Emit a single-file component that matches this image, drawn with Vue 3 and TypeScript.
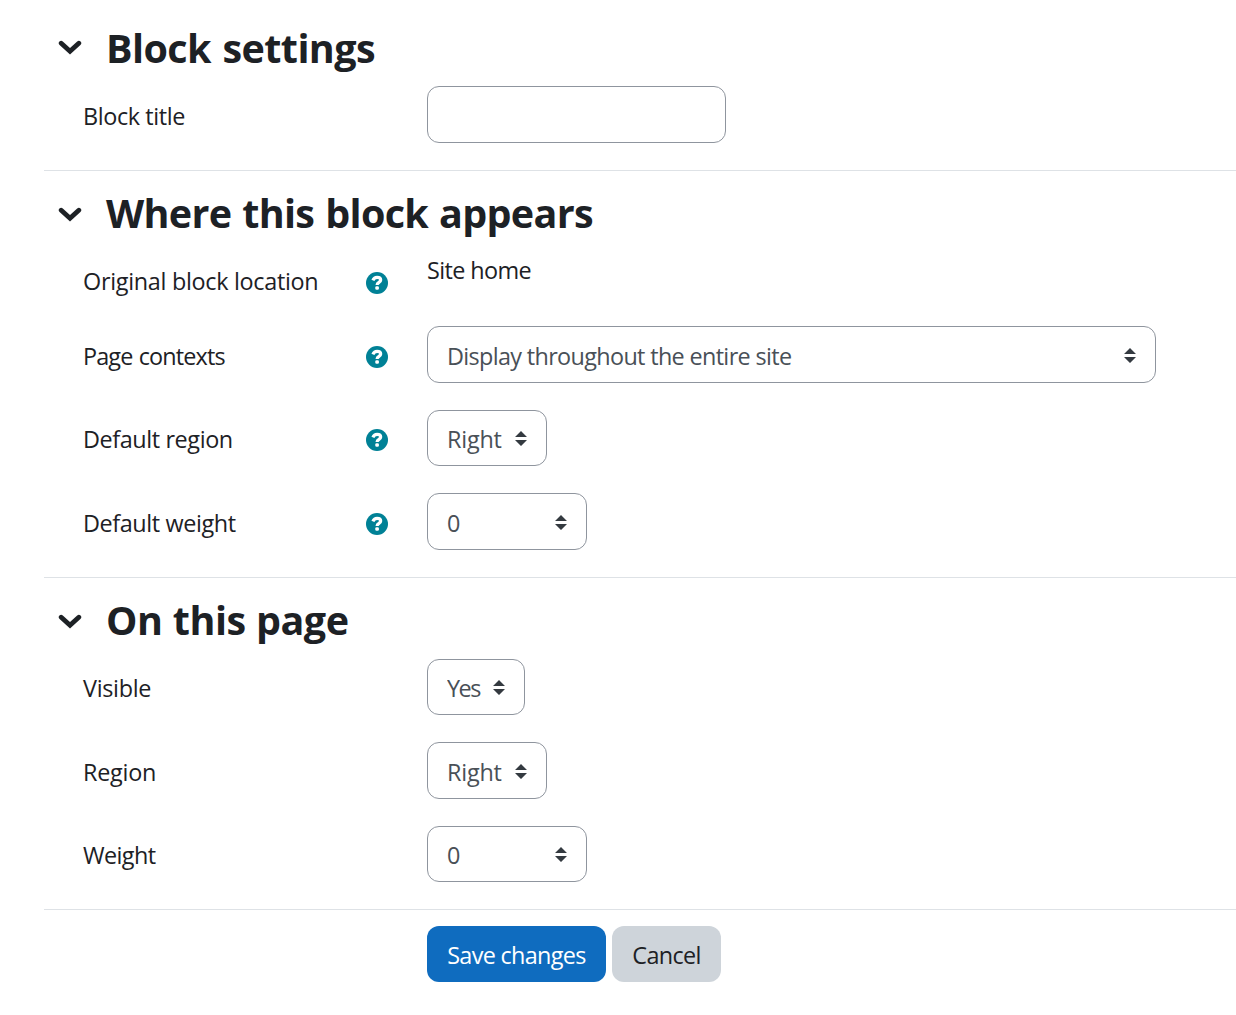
<script setup lang="ts">
import { reactive } from 'vue'

interface Field {
  id: string
  label: string
  kind: 'text' | 'static' | 'select'
  value: string
  size: string
  options?: string[]
  help?: boolean
}

interface Section {
  id: string
  title: string
  fields: Field[]
}

const weights = ['0', '1', '2', '3', '4', '5']

const sections = reactive<Section[]>([
  {
    id: 'settings',
    title: 'Block settings',
    fields: [{ id: 'title', label: 'Block title', kind: 'text', value: '', size: 'medium' }],
  },
  {
    id: 'where',
    title: 'Where this block appears',
    fields: [
      { id: 'location', label: 'Original block location', kind: 'static', value: 'Site home', size: 'plain', help: true },
      {
        id: 'contexts', label: 'Page contexts', kind: 'select', value: 'Display throughout the entire site', size: 'wide', help: true,
        options: ['Display throughout the entire site'],
      },
      { id: 'defaultregion', label: 'Default region', kind: 'select', value: 'Right', size: 'region', help: true, options: ['Right'] },
      { id: 'defaultweight', label: 'Default weight', kind: 'select', value: '0', size: 'weight', help: true, options: weights },
    ],
  },
  {
    id: 'page',
    title: 'On this page',
    fields: [
      { id: 'visible', label: 'Visible', kind: 'select', value: 'Yes', size: 'yesno', options: ['Yes', 'No'] },
      { id: 'region', label: 'Region', kind: 'select', value: 'Right', size: 'region', options: ['Right'] },
      { id: 'weight', label: 'Weight', kind: 'select', value: '0', size: 'weight', options: weights },
    ],
  },
])
</script>

<template>
  <form class="form" @submit.prevent>
    <section v-for="section in sections" :key="section.id" class="section" :class="section.id">
      <header class="heading">
        <svg class="chevron" viewBox="0 0 24 16" aria-hidden="true">
          <path d="M3.2 3.2 L12 11.3 L20.8 3.2" />
        </svg>
        <h3>{{ section.title }}</h3>
      </header>
      <div v-for="field in section.fields" :key="field.id" class="row" :class="[field.kind, 'f-' + field.id]">
        <div class="label-cell">
          <label :for="field.id">{{ field.label }}</label>
          <svg v-if="field.help" class="help" viewBox="0 0 22 22" aria-label="Help">
            <circle cx="11" cy="11" r="11" />
            <path d="M6.9 8.3 C7.8 6.2 9.1 5.4 11.1 5.4 C13.4 5.4 14.7 6.5 14.7 8.1 C14.7 10.4 11.1 10.3 11.1 12.9" />
            <rect x="9.3" y="14.3" width="3.6" height="3.5" rx="1.3" />
          </svg>
        </div>
        <input v-if="field.kind === 'text'" :id="field.id" v-model="field.value" class="control" :class="field.size" type="text" />
        <div v-else-if="field.kind === 'static'" class="value">{{ field.value }}</div>
        <div v-else class="picker" :class="field.size">
          <select :id="field.id" v-model="field.value" class="control">
            <option v-for="option in field.options" :key="option">{{ option }}</option>
          </select>
          <svg class="arrows" viewBox="0 0 12 15" aria-hidden="true">
            <path d="M0 6.1 L6 0 L12 6.1Z M0 9.1 L6 15 L12 9.1Z" />
          </svg>
        </div>
      </div>
    </section>
    <div class="actions">
      <button class="save" type="submit">Save changes</button>
      <button class="cancel" type="button">Cancel</button>
    </div>
  </form>
</template>

<style>
body {
  margin: 0;
  background: #fff;
}
</style>

<style scoped>
.form {
  box-sizing: border-box;
  width: 1236px;
  height: 1015px;
  padding: 6px 0 0 44px;
  overflow: hidden;
  color: #1d2125;
  font-family: "Open Sans", "Noto Sans", sans-serif;
  font-size: 23.4px;
  line-height: 32px;
}
.section {
  border-bottom: 1px solid #dee2e6;
}
.heading {
  display: flex;
  align-items: center;
  height: 80px;
}
.page .heading {
  height: 81px;
}
.chevron {
  width: 24px;
  height: 16px;
  margin: 4px 24px 0 14px;
  fill: none;
  stroke: #1d2125;
  stroke-width: 4.8;
  stroke-linecap: round;
  stroke-linejoin: miter;
}
.where .chevron,
.page .chevron {
  margin-top: 7px;
}
h3 {
  margin: 0;
  padding-top: 4px;
  font-size: 39.5px;
  font-weight: 700;
  line-height: 48px;
  letter-spacing: -0.68px;
  word-spacing: 1.3px;
  white-space: nowrap;
}
.settings h3 {
  letter-spacing: -0.6px;
  word-spacing: 2px;
}
.page h3 {
  padding-top: 2px;
  letter-spacing: -0.45px;
  word-spacing: 0.4px;
}
.row {
  display: flex;
  height: 56px;
  margin-bottom: 27px;
}
.f-title,
.f-contexts,
.f-defaultweight,
.f-region {
  height: 57px;
}
.static {
  height: 75px;
  margin-bottom: 0;
}
.label-cell {
  display: flex;
  align-items: center;
  box-sizing: border-box;
  width: 383px;
  padding: 1px 39px 0 39px;
  white-space: nowrap;
}
.static .label-cell {
  height: 59px;
}
label {
  letter-spacing: -0.4px;
}
.f-title label,
.f-contexts label,
.f-defaultweight label,
.f-region label {
  padding-top: 2px;
}
.f-location label,
.f-visible label {
  letter-spacing: -0.3px;
}
.f-contexts label {
  letter-spacing: -0.85px;
  word-spacing: 1px;
}
.f-region label {
  letter-spacing: -0.25px;
}
.f-weight label {
  letter-spacing: -0.6px;
}
.help {
  width: 22px;
  height: 22px;
  margin: 3px 0 0 auto;
}
.help circle {
  fill: #008196;
}
.help rect {
  fill: #fff;
}
.help path {
  fill: none;
  stroke: #fff;
  stroke-width: 3.2;
}
.value {
  padding-top: 3px;
  letter-spacing: -0.6px;
}
.picker {
  position: relative;
}
.control {
  box-sizing: border-box;
  display: block;
  width: 100%;
  height: 100%;
  margin: 0;
  padding: 1px 19px 0;
  border: 1.5px solid #8f959e;
  border-radius: 12px;
  outline: none;
  appearance: none;
  background: #fff;
  color: #495057;
  font: inherit;
  letter-spacing: -0.2px;
}
.f-contexts .control,
.f-defaultweight .control,
.f-region .control {
  padding-top: 3px;
}
.f-contexts .control {
  letter-spacing: -0.65px;
}
.f-visible .control {
  letter-spacing: -1.5px;
}
.medium {
  width: 299px;
}
.wide {
  width: 729px;
}
.region {
  width: 120px;
}
.weight {
  width: 160px;
}
.yesno {
  width: 98px;
}
.arrows {
  position: absolute;
  top: 50%;
  right: 20px;
  width: 12px;
  height: 15px;
  margin-top: -7px;
  fill: #343a40;
  pointer-events: none;
}
.actions {
  display: flex;
  gap: 6px;
  padding: 16px 0 0 383px;
}
button {
  height: 56px;
  padding: 1px 0 0;
  border: 0;
  border-radius: 12px;
  font: inherit;
  letter-spacing: -0.67px;
}
.save {
  width: 179px;
  background: #0f6cbf;
  color: #fff;
}
.cancel {
  width: 109px;
  background: #ced4da;
  color: #1d2125;
}
</style>
